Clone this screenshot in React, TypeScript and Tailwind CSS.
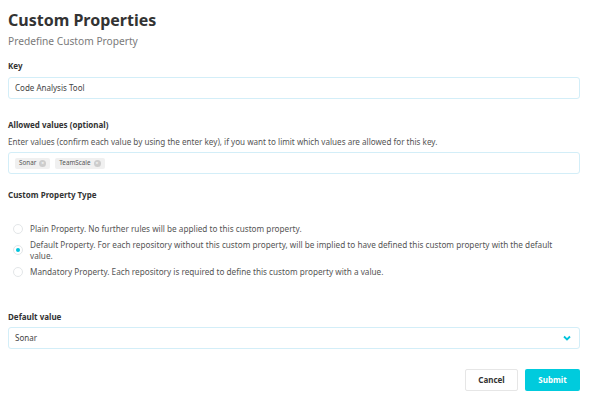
import React from "react";

const font = { fontFamily: '"Noto Sans", "Open Sans", sans-serif' };

function Radio({ checked }: { checked?: boolean }) {
  return (
    <span className="flex h-[10px] w-[10px] shrink-0 items-center justify-center rounded-full border border-[#e3e6e8] bg-white">
      {checked && <span className="h-[4px] w-[4px] rounded-full bg-[#00c3dc]" />}
    </span>
  );
}

function Tag({ label }: { label: string }) {
  return (
    <span className="flex h-[11px] items-center gap-[3px] rounded-[2px] bg-[#f0f0f0] px-[4px] text-[6.3px] text-[#555]">
      {label}
      <span className="flex h-[7px] w-[7px] items-center justify-center rounded-full bg-[#cccccc] text-[5px] leading-none text-white">
        ×
      </span>
    </span>
  );
}

export default function App() {
  return (
    <div className="h-[400px] w-[590px] bg-white px-[8px] pt-[9px] text-[#333]" style={font}>
      <h1 className="text-[16px] font-bold leading-[22px] text-[#333]">Custom Properties</h1>
      <div className="mt-[3px] text-[10.2px] leading-[14px] text-[#7a7a7a]">Predefine Custom Property</div>

      <div className="mt-[13px] text-[8px] font-bold leading-[10px]">Key</div>
      <div className="mt-[6px] flex h-[22px] w-[572px] items-center rounded-[3px] border border-[#d3eef8] px-[6px] text-[8px] text-[#444]">
        Code Analysis Tool
      </div>

      <div className="mt-[21px] text-[8px] font-bold leading-[10px]">Allowed values (optional)</div>
      <div className="mt-[7px] text-[8.1px] leading-[10px] text-[#555]">
        Enter values (confirm each value by using the enter key), if you want to limit which values are allowed for this key.
      </div>
      <div className="mt-[5px] flex h-[22px] w-[572px] items-center gap-[5px] rounded-[3px] border border-[#d3eef8] px-[6px]">
        <Tag label="Sonar" />
        <Tag label="TeamScale" />
      </div>

      <div className="mt-[16px] text-[8px] font-bold leading-[10px]">Custom Property Type</div>

      <div className="mt-[23px] flex flex-col gap-[5px] pl-[5px] text-[8.2px] leading-[11px] text-[#555]">
        <div className="flex items-center gap-[7px]">
          <Radio />
          <span>Plain Property. No further rules will be applied to this custom property.</span>
        </div>
        <div className="flex items-center gap-[7px]">
          <Radio checked />
          <span className="w-[530px]">
            Default Property. For each repository without this custom property, will be implied to have defined this custom property with the default value.
          </span>
        </div>
        <div className="flex items-center gap-[7px]">
          <Radio />
          <span>Mandatory Property. Each repository is required to define this custom property with a value.</span>
        </div>
      </div>

      <div className="mt-[35px] text-[8px] font-bold leading-[10px]">Default value</div>
      <div className="mt-[5px] flex h-[22px] w-[572px] items-center justify-between rounded-[3px] border border-[#d3eef8] px-[6px] text-[8px] text-[#444]">
        <span>Sonar</span>
        <svg width="8" height="6" viewBox="0 0 8 6" className="mr-[2px]">
          <path d="M1 1.5 L4 4.5 L7 1.5" fill="none" stroke="#00c3dc" strokeWidth="1.8" />
        </svg>
      </div>

      <div className="mt-[20px] flex w-[572px] justify-end gap-[7px]">
        <button className="h-[22px] w-[53px] rounded-[2px] border border-[#e6e6e6] bg-white text-[8px] font-bold text-[#333]">
          Cancel
        </button>
        <button className="h-[22px] w-[55px] rounded-[2px] bg-[#00cbdd] text-[8px] font-bold text-white">
          Submit
        </button>
      </div>
    </div>
  );
}
